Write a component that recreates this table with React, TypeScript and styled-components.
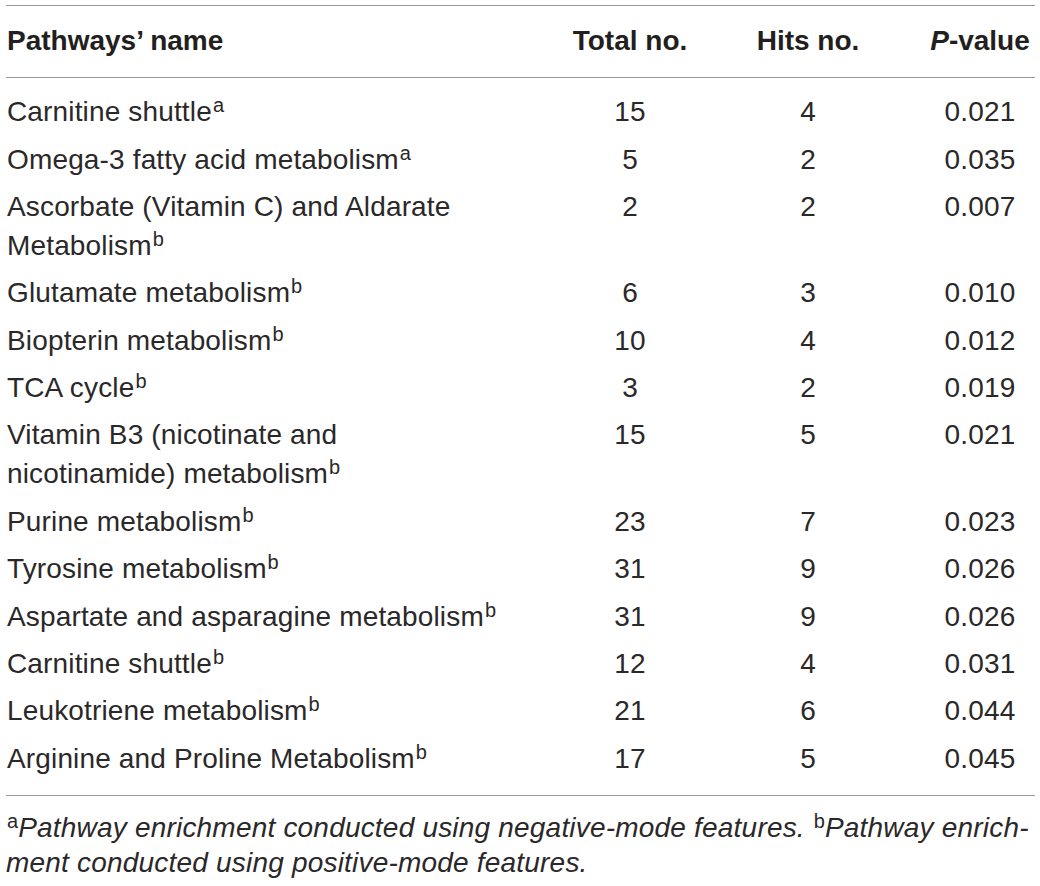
import React from "react";
import styled, { createGlobalStyle } from "styled-components";

const GlobalStyle = createGlobalStyle`
  body {
    margin: 0;
    background: #ffffff;
    font-family: "Liberation Sans", Arial, sans-serif;
    color: #231f20;
  }
`;

const Page = styled.div`
  width: 1040px;
  padding-top: 5px;
`;

const Rule = styled.div`
  height: 1px;
  margin: 0 5px 0 6px;
  background: #9a9a9a;
`;

const Grid = styled.div<{ $head?: boolean }>`
  display: grid;
  grid-template-columns: 553px 140px 216px 1fr;
  padding: ${(p) => (p.$head ? "15px 0 17px 7px" : "0 0 0 7px")};
  font-size: 28px;
  line-height: 39px;
  font-weight: ${(p) => (p.$head ? 700 : 400)};
  color: ${(p) => (p.$head ? "#231f20" : "#2b2829")};
`;

const Body = styled.div`
  padding: 10px 0 13px;
`;

const Row = styled(Grid)`
  padding-top: 4.2px;
  padding-bottom: 4.2px;
  letter-spacing: 0.15px;
`;

const Name = styled.div`
  text-align: left;
`;

const Num = styled.div<{ $last?: boolean }>`
  text-align: center;
  padding-left: ${(p) => (p.$last ? "4px" : "0")};
`;

const Sup = styled.sup`
  font-size: 20px;
  line-height: 0;
  vertical-align: 9px;
  font-style: normal;
  margin-left: 1px;
  letter-spacing: 0;
`;

const Footnote = styled.div`
  padding: 14px 0 0 6px;
  font-size: 28px;
  line-height: 35px;
  font-style: italic;
  letter-spacing: 0.2px;
  color: #2b2829;
`;

const FootLine = styled.div`
  white-space: nowrap;
`;

type Pathway = { name: React.ReactNode; mark: string; total: number; hits: number; p: string };

const rows: Pathway[] = [
  { name: "Carnitine shuttle", mark: "a", total: 15, hits: 4, p: "0.021" },
  { name: "Omega-3 fatty acid metabolism", mark: "a", total: 5, hits: 2, p: "0.035" },
  {
    name: (
      <>
        Ascorbate (Vitamin C) and Aldarate
        <br />
        Metabolism
      </>
    ),
    mark: "b",
    total: 2,
    hits: 2,
    p: "0.007",
  },
  { name: "Glutamate metabolism", mark: "b", total: 6, hits: 3, p: "0.010" },
  { name: "Biopterin metabolism", mark: "b", total: 10, hits: 4, p: "0.012" },
  { name: "TCA cycle", mark: "b", total: 3, hits: 2, p: "0.019" },
  {
    name: (
      <>
        Vitamin B3 (nicotinate and
        <br />
        nicotinamide) metabolism
      </>
    ),
    mark: "b",
    total: 15,
    hits: 5,
    p: "0.021",
  },
  { name: "Purine metabolism", mark: "b", total: 23, hits: 7, p: "0.023" },
  { name: "Tyrosine metabolism", mark: "b", total: 31, hits: 9, p: "0.026" },
  { name: "Aspartate and asparagine metabolism", mark: "b", total: 31, hits: 9, p: "0.026" },
  { name: "Carnitine shuttle", mark: "b", total: 12, hits: 4, p: "0.031" },
  { name: "Leukotriene metabolism", mark: "b", total: 21, hits: 6, p: "0.044" },
  { name: "Arginine and Proline Metabolism", mark: "b", total: 17, hits: 5, p: "0.045" },
];

export default function App() {
  return (
    <Page>
      <GlobalStyle />
      <Rule />
      <Grid $head>
        <Name>Pathways’ name</Name>
        <Num>Total no.</Num>
        <Num>Hits no.</Num>
        <Num $last>
          <i>P</i>-value
        </Num>
      </Grid>
      <Rule />
      <Body>
        {rows.map((r, i) => (
          <Row key={i}>
            <Name>
              {r.name}
              <Sup>{r.mark}</Sup>
            </Name>
            <Num>{r.total}</Num>
            <Num>{r.hits}</Num>
            <Num $last>{r.p}</Num>
          </Row>
        ))}
      </Body>
      <Rule />
      <Footnote>
        <FootLine>
          <Sup>a</Sup>Pathway enrichment conducted using negative-mode features. <Sup>b</Sup>Pathway enrich-
        </FootLine>
        <FootLine>ment conducted using positive-mode features.</FootLine>
      </Footnote>
    </Page>
  );
}
